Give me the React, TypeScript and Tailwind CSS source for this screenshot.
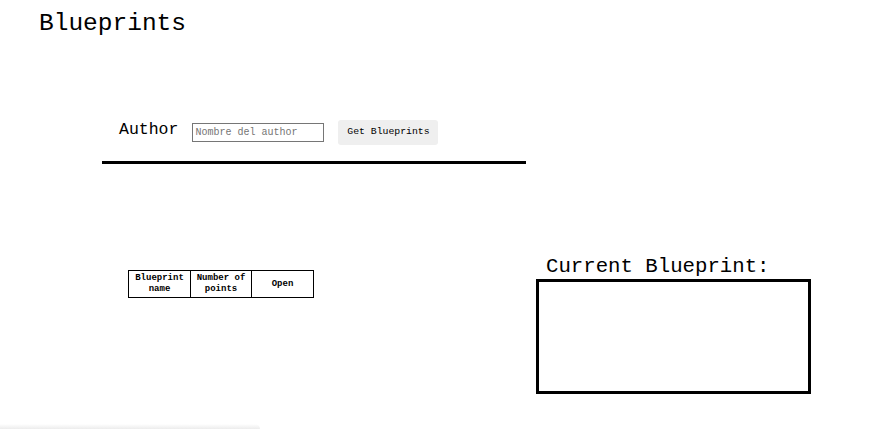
export default function App() {
  return (
    <div className="min-h-screen flex flex-col bg-white text-black font-['Liberation_Mono',monospace]">
      <h1 className="pl-[39px] pt-[10px] text-[24.5px] leading-[28px] font-normal">Blueprints</h1>

      <div className="flex mt-[82px]">
        {/* Left column: search + table */}
        <div className="ml-[102px] w-[424px]">
          <div className="flex items-center pl-[17px] h-[25px]">
            <span className="text-[16.5px] leading-[20px] -mt-[6px]">Author</span>
            <input
              className="ml-[14px] w-[132px] h-[19px] border border-[#767676] px-[2px] text-[10px] placeholder:text-[#757575] outline-none font-['Liberation_Mono',monospace]"
              placeholder="Nombre del author"
            />
            <button className="ml-[14px] w-[100px] h-[25px] bg-[#efefef] rounded-[3px] text-[9.8px] font-['Liberation_Mono',monospace]">
              Get Blueprints
            </button>
          </div>
          <div className="mt-[16px] h-[3px] bg-black" />

          <table className="ml-[26px] mt-[106px] border-collapse text-[9px] leading-[11px] font-bold">
            <thead>
              <tr className="h-[27px]">
                <th className="w-[62px] border border-black">Blueprint<br />name</th>
                <th className="w-[61px] border border-black">Number of<br />points</th>
                <th className="w-[62px] border border-black">Open</th>
              </tr>
            </thead>
            <tbody />
          </table>
        </div>

        {/* Right column: current blueprint */}
        <div className="ml-[10px] mt-[135px]">
          <h2 className="pl-[10px] text-[20.7px] leading-[24px]">Current Blueprint:</h2>
          <div className="w-[275px] h-[115px] border-[3px] border-black" />
        </div>
      </div>

      <div className="mt-auto w-[260px] h-[5px] bg-gradient-to-b from-transparent to-[#ececec] rounded-tr-[6px]" />
    </div>
  );
}
